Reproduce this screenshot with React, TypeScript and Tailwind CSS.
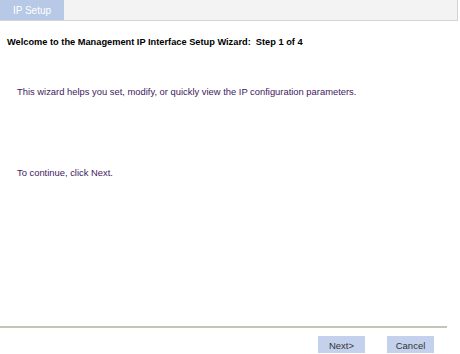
export default function App() {
  return (
    <div className="w-[460px] h-[354px] bg-white flex flex-col font-['Liberation_Sans',Arial,sans-serif] overflow-hidden">
      {/* tab bar */}
      <div className="flex w-[458px] h-[21px] bg-[#f3f3f3] border border-[#d4d4d4] border-l-0 border-t-0">
        <div className="w-[64px] h-[20px] bg-[#b7c9e7] text-white text-[10px] flex items-center justify-center">
          IP Setup
        </div>
      </div>

      <div className="pl-[7px] pt-[15px] text-[9.25px] font-bold text-black leading-[12px]">
        Welcome to the Management IP Interface Setup Wizard:&nbsp; Step 1 of 4
      </div>

      <div className="flex-1 pl-[17px] text-[9.4px] text-[#42205e] leading-[12px]">
        <p className="pt-[38px]">This wizard helps you set, modify, or quickly view the IP configuration parameters.</p>
        <p className="pt-[69px]">To continue, click Next.</p>
      </div>

      <div className="w-[447px] h-[2px] bg-[#c4c6b4] mb-[8px]" />

      <div className="flex justify-end gap-[22px] pr-[26px] pb-[1px]">
        <button className="w-[47px] h-[17px] bg-[#c3d1ed] text-[#333] text-[9.5px] leading-[17px] pt-[1px]">Next&gt;</button>
        <button className="w-[47px] h-[17px] bg-[#c3d1ed] text-[#333] text-[9.5px] leading-[17px] pt-[1px]">Cancel</button>
      </div>
    </div>
  );
}
